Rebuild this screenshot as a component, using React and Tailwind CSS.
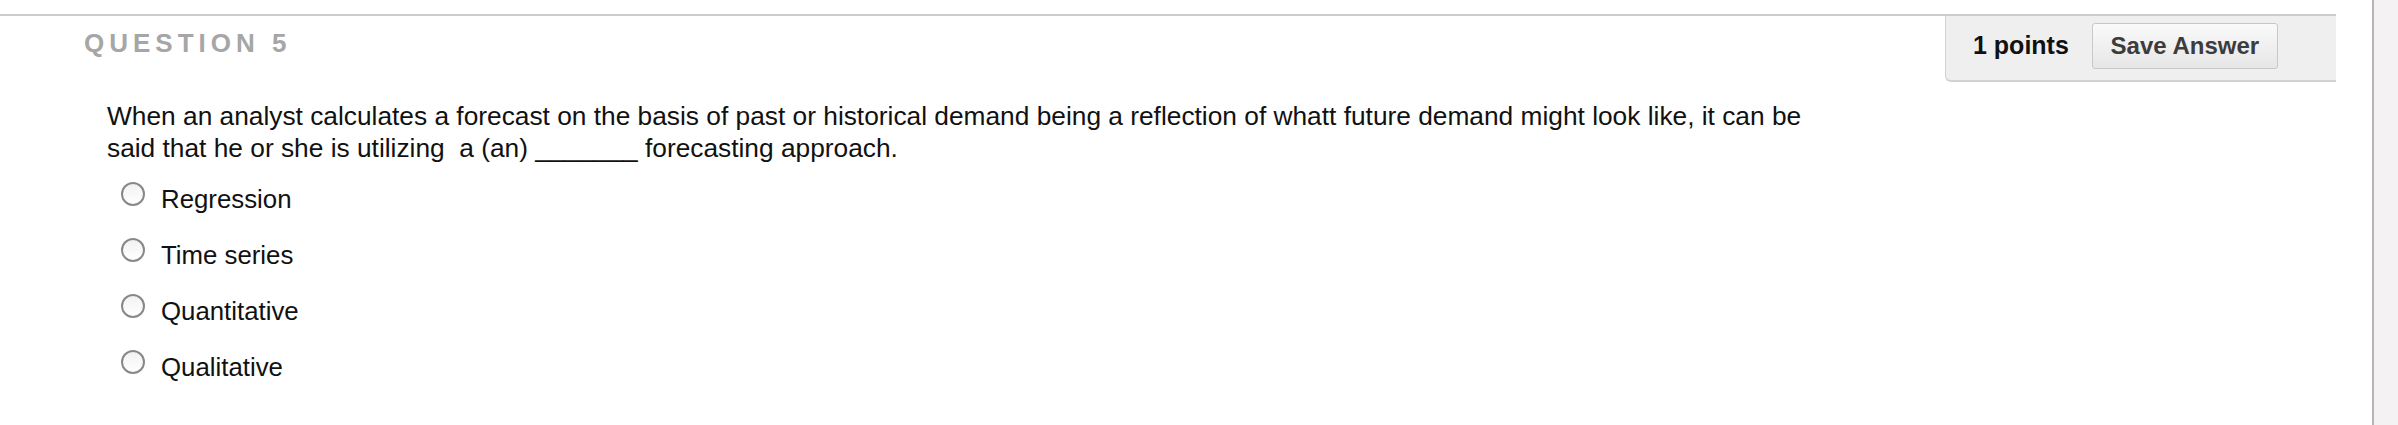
const options = ["Regression", "Time series", "Quantitative", "Qualitative"];

function Radio() {
  return (
    <span className="block mt-[3px] w-[24px] h-[24px] shrink-0 rounded-full border-2 border-[#888888] bg-gradient-to-b from-[#f2f2f2] to-white" />
  );
}

export default function App() {
  return (
    <div className="flex w-full h-[425px] bg-white text-black font-['Liberation_Sans',Arial,sans-serif]">
      <div className="flex-1 min-w-0">
        <div className="mt-[14px] mr-[36px] border-t-2 border-[#cccccc]">
          <div className="flex items-start justify-between">
            <h2 className="pl-[84px] pt-[14px] text-[26px] leading-[26px] font-bold tracking-[5px] text-[#a6a6a6]">
              QUESTION 5
            </h2>
            <div className="flex items-center w-[391px] h-[66px] pl-[27px] pb-[4px] bg-[#efefef] border-l border-b-2 border-[#d2d2d2] rounded-bl-[6px]">
              <span className="text-[25px] font-bold text-[#111]">1 points</span>
              <button
                type="button"
                className="ml-[23px] w-[186px] h-[46px] rounded-[3px] border border-[#c8c8c8] bg-gradient-to-b from-[#fafafa] to-[#e6e6e6] text-[24px] font-bold text-[#3c3c3c]"
              >
                Save Answer
              </button>
            </div>
          </div>
        </div>

        <div className="pl-[107px] pt-[18px]">
          <p className="text-[26.3px] leading-[32px] text-[#111]">
            When an analyst calculates a forecast on the basis of past or historical demand being a reflection of whatt future demand might look like, it can be
            <br />
            said that he or she is utilizing&nbsp; a (an) _______ forecasting approach.
          </p>
        </div>

        <ul className="mt-[15px] pl-[121px] flex flex-col">
          {options.map((opt) => (
            <li key={opt} className="flex items-start h-[56px]">
              <Radio />
              <span className="ml-[16px] pt-[5px] text-[25.8px] leading-[30px] text-[#111]">{opt}</span>
            </li>
          ))}
        </ul>
      </div>
      <div className="w-[26px] h-full border-l-2 border-[#b5b5b5] bg-[#f4f2f3]" />
    </div>
  );
}
